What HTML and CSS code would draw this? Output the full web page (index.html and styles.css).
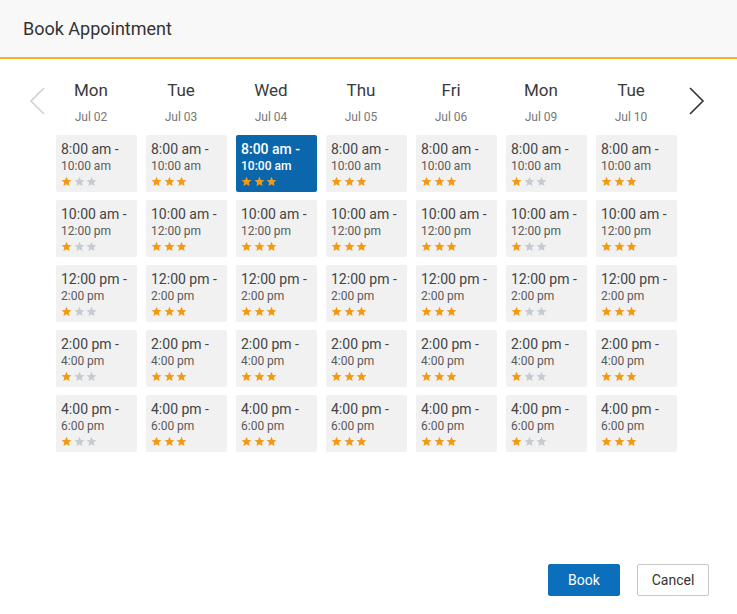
FILE: index.html
```html
<!DOCTYPE html>
<html>
<head>
<meta charset="utf-8">
<link rel="stylesheet" href="styles.css">
</head>
<body>
<div class="modal">
  <div class="header">Book Appointment</div>
  <div class="body">
    <div class="nav nav-left"><svg width="18" height="28" viewBox="0 0 18 28"><path d="M16 1 L3 14 L16 27" fill="none" stroke="#d0d0d0" stroke-width="1.6"/></svg></div>
    <div class="grid" id="grid"></div>
    <div class="nav nav-right"><svg width="18" height="28" viewBox="0 0 18 28"><path d="M2 1 L15 14 L2 27" fill="none" stroke="#333" stroke-width="1.6"/></svg></div>
  </div>
  <div class="footer">
    <button class="btn btn-primary">Book</button>
    <button class="btn btn-default">Cancel</button>
  </div>
</div>
<script>
var days=[["Mon","Jul 02",1],["Tue","Jul 03",3],["Wed","Jul 04",3],["Thu","Jul 05",3],["Fri","Jul 06",3],["Mon","Jul 09",1],["Tue","Jul 10",3]];
var slots=[["8:00 am -","10:00 am"],["10:00 am -","12:00 pm"],["12:00 pm -","2:00 pm"],["2:00 pm -","4:00 pm"],["4:00 pm -","6:00 pm"]];
var star='<svg class="star" viewBox="0 0 24 24"><path d="M12 1.5l3.1 7.1 7.7.7-5.8 5.1 1.7 7.6L12 18l-6.7 4 1.7-7.6-5.8-5.1 7.7-.7z"/></svg>';
var g=document.getElementById('grid');
days.forEach(function(d,i){
  var c=document.createElement('div');c.className='col';
  var h='<div class="day">'+d[0]+'</div><div class="date">'+d[1]+'</div>';
  slots.forEach(function(s,j){
    var sel=(i==2&&j==0)?' selected':'';
    var st='';
    for(var k=0;k<3;k++){st+='<span class="'+(k<d[2]?'on':'off')+'">'+star+'</span>';}
    h+='<div class="slot'+sel+'"><div class="t1">'+s[0]+'</div><div class="t2">'+s[1]+'</div><div class="stars">'+st+'</div></div>';
  });
  c.innerHTML=h;g.appendChild(c);
});
</script>
</body>
</html>
```

FILE: styles.css
```css
html,body{margin:0;padding:0;background:#fff;}
body{font-family:Roboto,"Liberation Sans",Arial,sans-serif;color:#333;}
.modal{width:737px;height:614px;position:relative;display:flex;flex-direction:column;}
.header{height:57px;background:#f8f8f8;border-bottom:2px solid #f6b026;box-sizing:content-box;padding-left:23px;font-size:18px;line-height:57px;color:#333;}
.body{display:flex;align-items:flex-start;height:490px;}
.nav{width:46px;display:flex;justify-content:center;padding-top:28px;}
.nav-left{padding-left:2px;justify-content:flex-start;width:44px;}
.nav-left svg{margin-left:26px;}
.nav-right{margin-left:0;justify-content:flex-start;}
.nav-right svg{margin-left:12px;}
.grid{display:flex;}
.col{width:90px;display:flex;flex-direction:column;align-items:stretch;}
.day{text-align:center;font-size:17px;line-height:20px;margin-top:21px;color:#3a3a3a;}
.date{text-align:center;font-size:12px;color:#777;line-height:14px;margin-top:10px;margin-bottom:11px;}
.slot{width:81px;height:57px;margin-left:10px;margin-bottom:8px;background:#f1f1f1;border-radius:2px;box-sizing:border-box;padding:5px 0 0 5px;}
.t1{font-size:14px;line-height:18px;color:#444;}
.t2{font-size:12px;line-height:14px;color:#5a5a5a;margin-top:1px;}
.stars{display:flex;margin-top:3px;height:11px;}
.stars span{width:12.5px;height:11px;display:block;}
.star{width:11px;height:11px;display:block;}
.on .star{fill:#f39a12;}
.off .star{fill:#c5cbd1;}
.slot.selected{background:#0b66ac;}
.slot.selected .t1,.slot.selected .t2{color:#fff;font-weight:500;}
.footer{display:flex;justify-content:flex-end;gap:17px;padding-right:28px;margin-top:15px;}
.btn{width:72px;height:32px;font-family:Roboto,"Liberation Sans",Arial,sans-serif;font-size:14px;border-radius:2px;cursor:pointer;}
.btn-primary{background:#0c6fbb;color:#fff;border:1px solid #0c6fbb;}
.btn-default{background:#fff;color:#333;border:1px solid #c8c8c8;}
```
